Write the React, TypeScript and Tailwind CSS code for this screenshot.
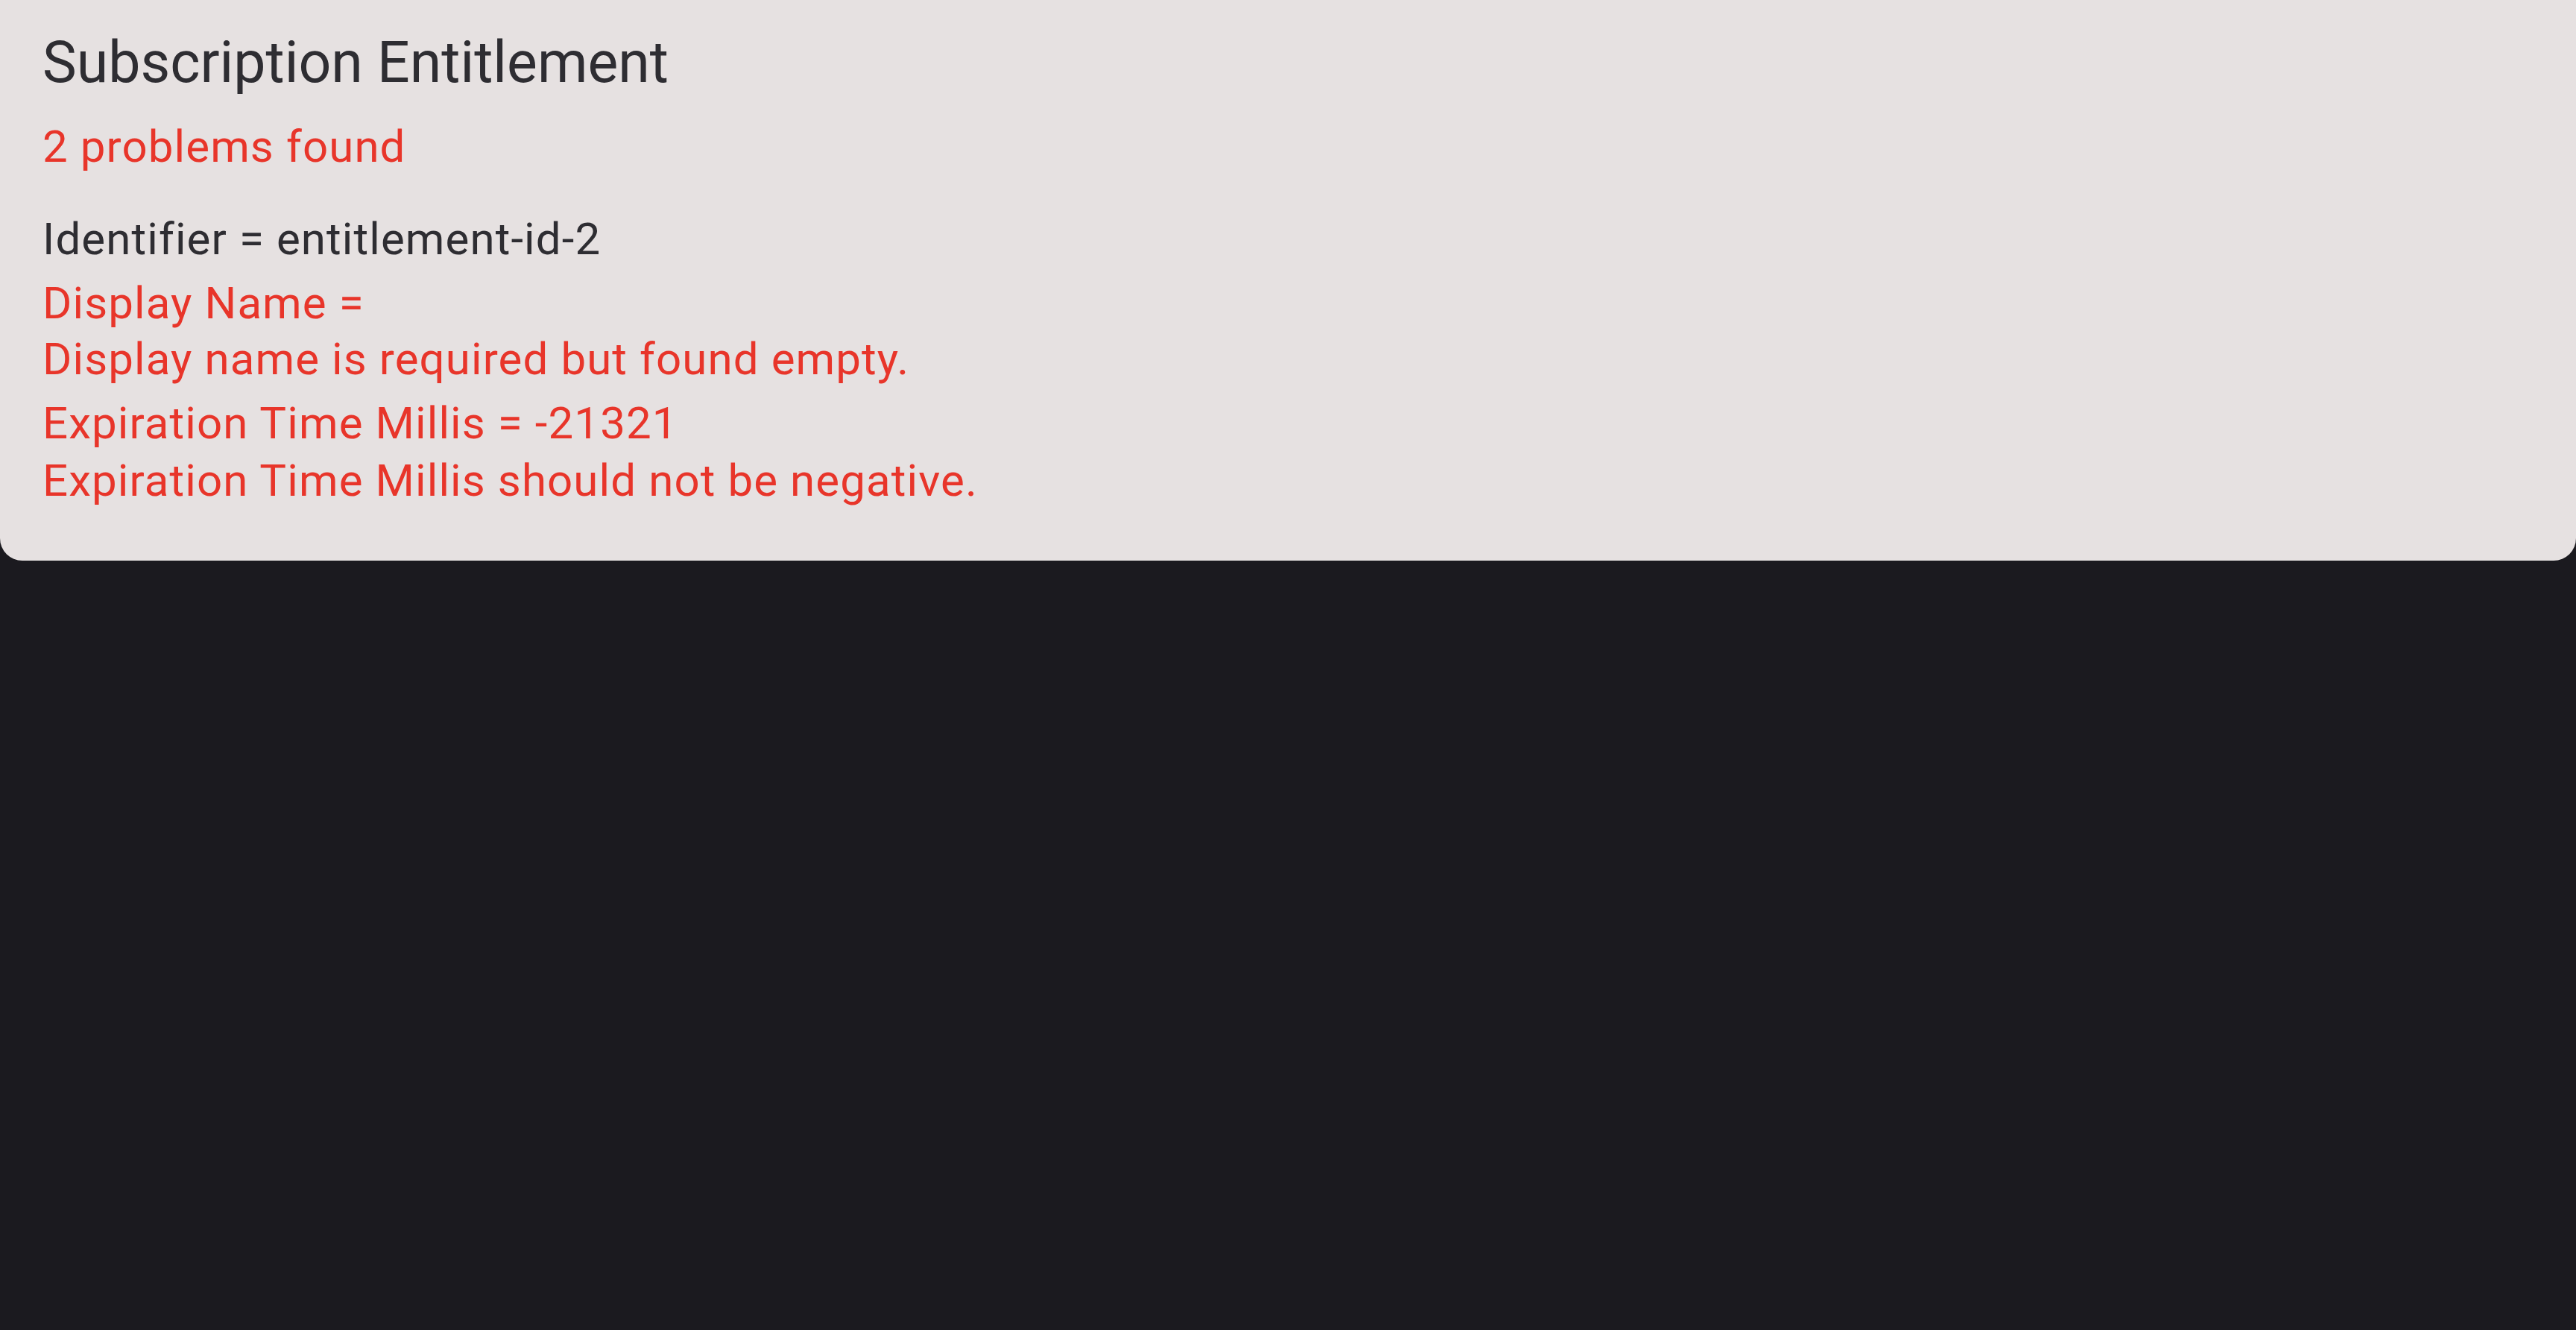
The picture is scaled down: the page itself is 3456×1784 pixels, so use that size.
export default function App() {
  return (
    <div className="flex min-h-screen flex-col bg-[#1b1a1f] font-['Roboto',sans-serif]">
      <section className="rounded-b-[30px] bg-[#e6e1e1] px-[57px] pb-[69px] pt-[34px]">
        <h1 className="text-[77px] leading-[100px] text-[#2e2d32]">Subscription Entitlement</h1>
        <p className="mt-[13px] text-[60px] leading-[100px] tracking-[1.1px] text-[#e8352a]">2 problems found</p>

        <div className="mt-[36px] flex flex-col text-[60px] tracking-[1.1px]">
          <p className="leading-[75px] text-[#2e2d32]">Identifier = entitlement-id-2</p>

          <div className="mt-[11px] leading-[75px] text-[#e8352a]">
            <p>Display Name =</p>
            <p>Display name is required but found empty.</p>
          </div>

          <div className="mt-[10px] leading-[77px] text-[#e8352a]">
            <p>Expiration Time Millis = -21321</p>
            <p>Expiration Time Millis should not be negative.</p>
          </div>
        </div>
      </section>
    </div>
  );
}
